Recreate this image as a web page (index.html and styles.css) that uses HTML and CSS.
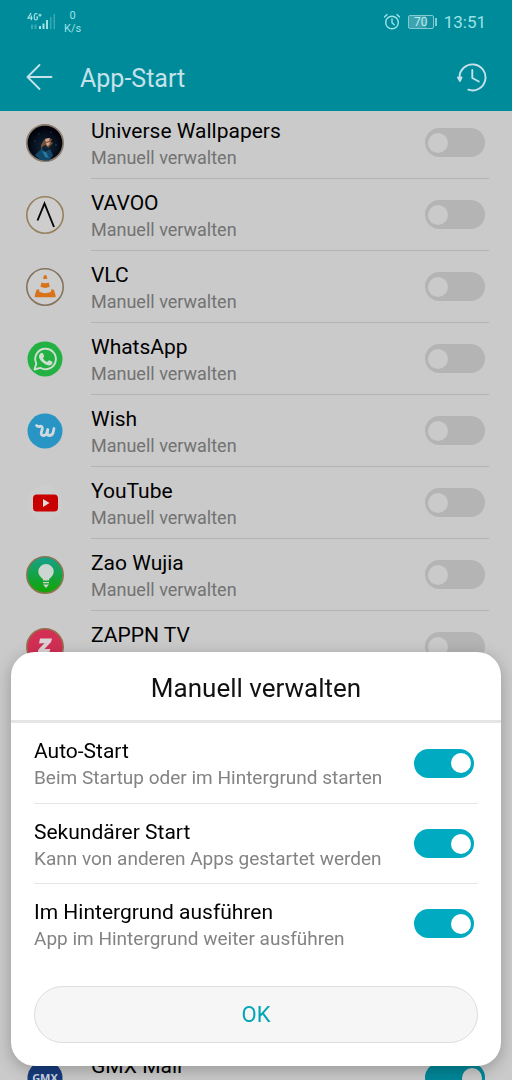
FILE: index.html
```
<!DOCTYPE html>
<html lang="de">
<head>
<meta charset="utf-8">
<meta name="viewport" content="width=device-width, initial-scale=1">
<title>App-Start</title>
<link rel="stylesheet" href="styles.css">
</head>
<body>
<div class="screen">
  <header class="top">
    <div class="status">
      <div class="status-left">
        <svg class="signal" width="30" height="20" viewBox="0 0 30 20" aria-hidden="true">
          <g fill="none" stroke="#9ee2e6" stroke-width="1.200"><path d="M5 1L2 6.200h4.600M5.400 3.500v4.800M11.500 2.200Q10.800 1.500 10 1.500 8.200 1.500 8.200 4.800T10 7.800q1.500 0 1.500-1.200V5H10M12.500 3.200h3M14 1.700v3"/></g>
          <g fill="#9ee2e6"><path d="M13 14h2v3h-2zM16.500 11.500h2V17h-2zM20 8h2v9h-2z"/><path opacity=".35" d="M5 12.500h2V17H5zM8.500 12.500h2V17h-2zM24 5h1.500v12H24zM27.500 2H29v15h-1.500z"/></g>
        </svg>
        <div class="speed"><span>0</span><span>K/s</span></div>
      </div>
      <div class="status-right">
        <svg width="18" height="18" viewBox="0 0 18 18" fill="none" stroke="#9ee2e6" stroke-width="1.400" stroke-linecap="round" aria-hidden="true"><circle cx="9" cy="9.500" r="6.300"/><path d="M9 6v3.700l2.200 2M1.500 4L4 1.500M16.500 4L14 1.500"/></svg>
        <div class="battery"><span>70</span></div>
        <time>13:51</time>
      </div>
    </div>
    <div class="bar">
      <button class="icon-button" aria-label="Zurück"><svg width="28" height="28" viewBox="0 0 28 28" fill="none" stroke="#c5e2ea" stroke-width="1.800" stroke-linecap="round" stroke-linejoin="round"><path d="M26.500 13H2.500M14.500 1L2.500 13l12 12"/></svg></button>
      <h1>App-Start</h1>
      <button class="icon-button" aria-label="Verlauf"><svg width="30" height="30" viewBox="0 0 30 30" fill="none" stroke="#c5e2ea" stroke-width="1.900" stroke-linecap="round" stroke-linejoin="round"><path d="M2.500 14.500A13 13 0 1 1 11.300 26.700"/><path d="M15.300 7v8l6.500 3.500"/><path d="M1 14.500h3.500L3 18z" fill="#c5e2ea"/></svg></button>
    </div>
  </header>
  <main class="content">
    <ul class="apps">
      <li class="app">
        <svg class="app-icon" viewBox="0 0 40 40" aria-hidden="true"><defs><radialGradient id="space" cx=".5" cy=".6"><stop offset="0" stop-color="#10283d"/><stop offset="1" stop-color="#02030c"/></radialGradient><clipPath id="disc"><circle cx="20" cy="20" r="18"/></clipPath></defs><circle cx="20" cy="20" r="18.200" fill="url(#space)" stroke="#8b7c6d" stroke-width="1.700"/><g clip-path="url(#disc)"><path d="M10 32l7-7 3 4 5-3 3 6-4 6-9-1z" fill="#12476a"/><path d="M17 28l4 1 3 6-4-1z" fill="#287a9d"/><path d="M16 22l3-5 3-2 5 1-1 3 2 1-5 5-2-3-3 1-2 3z" fill="#77513b"/><path d="M20 16l5-1-1 3-3 1zM21 20l4-1-1 3-2 1z" fill="#d5a88b"/></g><g fill="#39617c"><circle cx="10" cy="18" r=".6"/><circle cx="26" cy="9" r=".6"/><circle cx="31" cy="22" r=".7"/><circle cx="14" cy="11" r=".5"/></g></svg>
        <label class="text" for="a1"><span class="name">Universe Wallpapers</span><span class="note">Manuell verwalten</span></label><input class="switch dim" id="a1" type="checkbox" role="switch"></li>
      <li class="app">
        <svg class="app-icon" viewBox="0 0 40 40" aria-hidden="true"><circle cx="20" cy="20" r="18.200" fill="#cdcdcd" stroke="#97825f" stroke-width="1.600"/><path d="M12.500 25.500L19.500 8.500 29 32" fill="none" stroke="#050505" stroke-width="1.900"/></svg>
        <label class="text" for="a2"><span class="name">VAVOO</span><span class="note">Manuell verwalten</span></label><input class="switch dim" id="a2" type="checkbox" role="switch"></li>
      <li class="app">
        <svg class="app-icon" viewBox="0 0 40 40" aria-hidden="true"><circle cx="20" cy="20" r="18.200" fill="#cdcdcd" stroke="#84745f" stroke-width="1.600"/><path d="M19 8.500q1.200-1 2.400 0l1 3q-2.200 1-4.400 0zM16.500 15.500q3.700 1.500 7.300 0l1 4.300q-4.600 2.200-9.400 0zM12.500 22.500h2l-.5 2q6.200 3.400 12.400 0l-.5-2h2q1 0 1.300 1l1.500 5.500q.2 1.200-1 1.200h-19q-1.200 0-1-1.200l1.500-5.500q.3-1 1.300-1z" fill="#d8731a"/></svg>
        <label class="text" for="a3"><span class="name">VLC</span><span class="note">Manuell verwalten</span></label><input class="switch dim" id="a3" type="checkbox" role="switch"></li>
      <li class="app">
        <svg class="app-icon" viewBox="0 0 40 40" aria-hidden="true"><circle cx="20" cy="20" r="17.500" fill="#24b144"/><path d="M9.500 30.500l1.800-6A10.300 10.300 0 1 1 15.200 28.800z" fill="none" stroke="#d0ded2" stroke-width="1.900" stroke-linejoin="round"/><path d="M16 14h1.800l1.300 3.100q.1.400-.2.800l-1.100 1.300q1.600 2.700 4.500 3.800l1.400-1.600q.3-.3.700-.2l3 1.500q.4 2.500-1.600 3.400-2.500 1.200-6.400-1.300-3.800-2.500-5.100-5.600-1.100-3.300 1.700-5.200z" fill="#d0ded2"/></svg>
        <label class="text" for="a4"><span class="name">WhatsApp</span><span class="note">Manuell verwalten</span></label><input class="switch dim" id="a4" type="checkbox" role="switch"></li>
      <li class="app">
        <svg class="app-icon" viewBox="0 0 40 40" aria-hidden="true"><circle cx="20" cy="20" r="17.500" fill="#2895c5"/><path d="M11.500 14.500q1.200 1.500 3.500.8 2.800-.3 2.300 2.700l-1 3.500q-.5 3 2 3t3.500-2.500l1-3.500-.5 3.500q0 2.500 2.200 2.500t3.500-2.500l1-4.500" fill="none" stroke="#cfd9dd" stroke-width="2.800" stroke-linecap="round" stroke-linejoin="round"/></svg>
        <label class="text" for="a5"><span class="name">Wish</span><span class="note">Manuell verwalten</span></label><input class="switch dim" id="a5" type="checkbox" role="switch"></li>
      <li class="app">
        <svg class="app-icon" viewBox="0 0 40 40" aria-hidden="true"><circle cx="20" cy="20" r="17.500" fill="#cdcdcd"/><rect x="8" y="11.500" width="25" height="17" rx="3.800" fill="#c90000"/><path d="M18 16v8l6.500-4z" fill="#ddd"/></svg>
        <label class="text" for="a6"><span class="name">YouTube</span><span class="note">Manuell verwalten</span></label><input class="switch dim" id="a6" type="checkbox" role="switch"></li>
      <li class="app">
        <svg class="app-icon" viewBox="0 0 40 40" aria-hidden="true"><defs><linearGradient id="lamp" x2="0" y2="1"><stop stop-color="#16a08c"/><stop offset="1" stop-color="#12a500"/></linearGradient></defs><circle cx="20" cy="20" r="18.200" fill="url(#lamp)" stroke="#887750" stroke-width="1.500"/><path d="M18 25.500v-1.300Q13.300 20.500 13.300 16.500a7.700 7.500 0 0 1 15.400 0q0 4-4.700 7.700v1.300zM18 27h6v1.300h-6zM18 29.500h6L21 33z" fill="#cbd6d0"/></svg>
        <label class="text" for="a7"><span class="name">Zao Wujia</span><span class="note">Manuell verwalten</span></label><input class="switch dim" id="a7" type="checkbox" role="switch"></li>
      <li class="app">
        <svg class="app-icon" viewBox="0 0 40 40" aria-hidden="true"><circle cx="20" cy="20" r="18.200" fill="#d22f55" stroke="#96704e" stroke-width="1.500"/><path d="M15 11.500h12l-1 3.500-6.500 7h6L24 26H12.500l1-3.500L19.500 16l-5.500.5z" fill="#dcd3d6"/></svg>
        <label class="text" for="a8"><span class="name">ZAPPN TV</span><span class="note">Manuell verwalten</span></label><input class="switch dim" id="a8" type="checkbox" role="switch"></li>
    </ul>
    <ul class="apps apps-auto">
      <li class="app">
        <svg class="app-icon" viewBox="0 0 40 40" aria-hidden="true"><circle cx="20" cy="20" r="17.500" fill="#163c7d"/><text class="gmx" x="20" y="24" text-anchor="middle">GMX</text></svg>
        <label class="text" for="a9"><span class="name">GMX Mail</span></label><input class="switch dim" id="a9" type="checkbox" role="switch" checked></li>
    </ul>
  </main>
  <section class="dialog" role="dialog" aria-labelledby="dialog-title">
    <h2 id="dialog-title">Manuell verwalten</h2>
    <div class="options">
      <div class="option"><label class="text" for="o1"><span class="name">Auto-Start</span><span class="note">Beim Startup oder im Hintergrund starten</span></label><input class="switch" id="o1" type="checkbox" role="switch" checked></div>
      <div class="option"><label class="text" for="o2"><span class="name">Sekundärer Start</span><span class="note">Kann von anderen Apps gestartet werden</span></label><input class="switch" id="o2" type="checkbox" role="switch" checked></div>
      <div class="option"><label class="text" for="o3"><span class="name">Im Hintergrund ausführen</span><span class="note">App im Hintergrund weiter ausführen</span></label><input class="switch" id="o3" type="checkbox" role="switch" checked></div>
    </div>
    <button class="ok">OK</button>
  </section>
</div>
</body>
</html>
```
FILE: styles.css
```
* { box-sizing: border-box; }
body { margin: 0; font-family: Roboto, "Liberation Sans", sans-serif; }
button { font: inherit; cursor: pointer; }
.screen { height: 100vh; display: flex; flex-direction: column; overflow: hidden; background: #cacaca; }

.top { flex: none; background: #008b9b; color: #c5e2ea; }
.status { display: flex; justify-content: space-between; height: 44px; padding: 0 26px; color: #9ee2e6; }
.status-left, .status-right { display: flex; align-items: center; }
.status-left { gap: 8px; }
.status-right { gap: 7px; }
.speed { display: flex; flex-direction: column; align-items: center; font-size: 11px; line-height: 13px; }
.battery { position: relative; display: flex; align-items: center; justify-content: center; width: 26px; height: 14px; margin-right: 3px; border: 1px solid #7fcbd1; border-radius: 2px; background: linear-gradient(90deg, #3fa3af 70%, #128f9e 70%); color: #b5eef0; font-size: 12px; line-height: 12px; }
.battery::after { content: ""; position: absolute; right: -4px; top: 2px; width: 2px; height: 8px; background: #7fcbd1; }
time { font-size: 17px; }
.bar { display: flex; align-items: center; height: 67px; padding: 0 25px; }
.bar h1 { flex: 1; margin: 0 0 0 27px; padding-top: 2px; font-size: 25px; line-height: 32px; font-weight: 400; }
.icon-button { display: flex; padding: 0; border: 0; background: none; color: inherit; }

.content { flex: 1; min-height: 0; overflow: hidden; }
.apps { list-style: none; margin: -4px 0 0; padding: 0 23px 0 25px; }
.apps-auto { margin-top: 359px; }
.app { display: grid; grid-template-columns: 40px 1fr 60px; column-gap: 26px; align-items: center; height: 72px; position: relative; padding: 0 4px 1px 0; }
.app::after { content: ""; position: absolute; left: 66px; right: 0; bottom: 0; border-bottom: 1px solid #b3b3b3; }
.app-icon { width: 40px; height: 40px; }
.text { display: flex; flex-direction: column; align-self: start; padding-top: 10px; }
.name { font-size: 21px; line-height: 28px; color: #000; }
.note { font-size: 18px; line-height: 26px; color: #727272; }
.gmx { font: bold 11px "Open Sans", sans-serif; fill: #d0d7e2; }

.switch { appearance: none; flex: none; display: flex; align-items: center; width: 60px; height: 29px; margin: 0; padding: 0 3px; border-radius: 15px; background: #e0e0e0; }
.switch::before { content: ""; width: 20px; height: 20px; border-radius: 50%; background: #fff; }
.switch:checked { justify-content: flex-end; background: #00abc2; }
.switch.dim { background: #b4b4b4; }
.switch.dim::before { background: #cacaca; }
.switch.dim:checked { background: #008799; }

.dialog { position: fixed; left: 11px; right: 11px; bottom: 14px; border-radius: 24px; background: #fff; box-shadow: 0 4px 16px rgba(0, 0, 0, .25); padding-bottom: 23px; }
.dialog h2 { margin: 0; padding: 20px 0 16px; border-bottom: 3px solid #e5e5e5; font-size: 26px; line-height: 32px; font-weight: 400; text-align: center; color: #111; }
.options { padding: 0 23px; }
.option { display: flex; justify-content: space-between; align-items: center; height: 80px; padding-right: 4px; }
.option + .option { border-top: 1px solid #e5e5e5; }
.option .text { padding-top: 14px; }
.option .note { font-size: 19px; color: #838383; }
.ok { display: block; width: calc(100% - 46px); height: 57px; margin: 23px 23px 0; border: 1px solid #dcdcdc; border-radius: 29px; background: #f6f6f6; color: #00a5b8; font-size: 22px; }
```
